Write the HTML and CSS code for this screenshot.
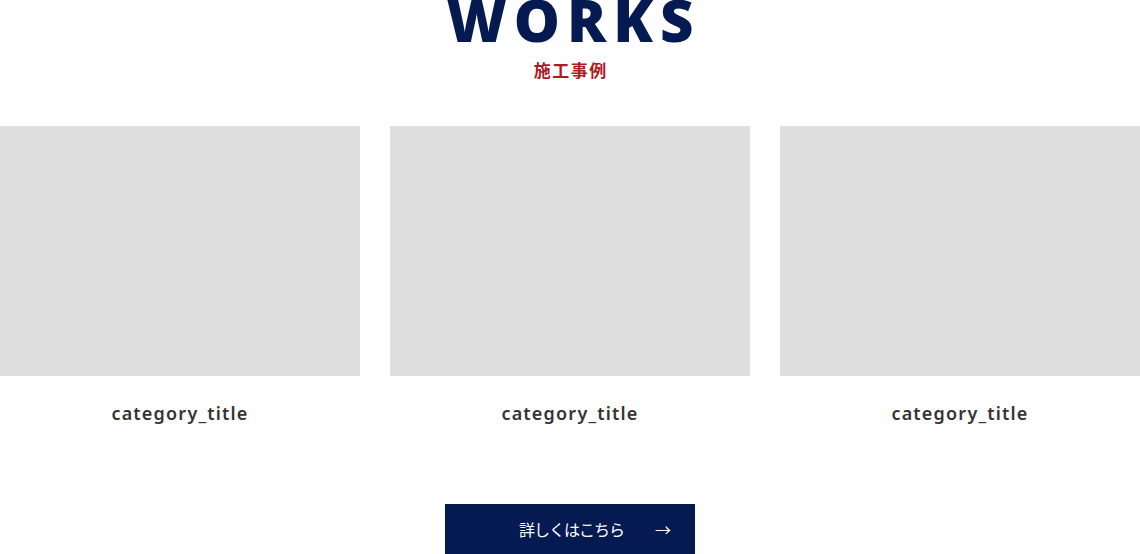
FILE: index.html
```html
<!DOCTYPE html>
<html lang="ja">
<head>
<meta charset="utf-8">
<link rel="stylesheet" href="styles.css">
</head>
<body>
<section class="works">
  <header class="works-head">
    <h2 class="works-title">WORKS</h2>
    <p class="works-sub">施工事例</p>
  </header>
  <div class="works-list">
    <a class="work-card" href="#">
      <div class="work-thumb"></div>
      <p class="work-name">category_title</p>
    </a>
    <a class="work-card" href="#">
      <div class="work-thumb"></div>
      <p class="work-name">category_title</p>
    </a>
    <a class="work-card" href="#">
      <div class="work-thumb"></div>
      <p class="work-name">category_title</p>
    </a>
  </div>
  <div class="works-more">
    <a class="more-btn" href="#"><span class="more-label">詳しくはこちら</span><span class="more-arrow">→</span></a>
  </div>
</section>
</body>
</html>
```
FILE: styles.css
```css
* { box-sizing: border-box; }
html, body { margin: 0; padding: 0; background: #fff; }
body { width: 1140px; overflow: hidden; }
.works { display: flex; flex-direction: column; align-items: center; }
.works-head { display: flex; flex-direction: column; align-items: center; margin-top: -16px; }
.works-title {
  margin: 0;
  padding-left: 7px;
  font-family: "Open Sans", "Noto Sans", sans-serif;
  font-weight: 800;
  font-size: 58px;
  line-height: 72px;
  letter-spacing: 7px;
  color: #041a50;
}
.works-sub {
  margin: 2px 0 0;
  font-family: "Noto Sans CJK JP", sans-serif;
  font-weight: 700;
  font-size: 17px;
  line-height: 24px;
  letter-spacing: 1.5px;
  padding-left: 1.5px;
  color: #ad1a1f;
}
.works-list {
  margin-top: 44px;
  width: 100%;
  display: grid;
  grid-template-columns: repeat(3, 360px);
  column-gap: 30px;
}
.work-card { display: flex; flex-direction: column; align-items: center; text-decoration: none; }
.work-thumb { width: 360px; height: 250px; background: #dfdfdf; }
.work-name {
  margin: 24px 0 0;
  font-family: "Noto Sans", "Open Sans", sans-serif;
  font-weight: 600;
  font-size: 18px;
  line-height: 26px;
  letter-spacing: 1.2px;
  color: #333;
}
.works-more { margin-top: 78px; }
.more-btn {
  display: flex;
  align-items: center;
  width: 250px;
  height: 50px;
  padding: 0 24px 0 74px;
  background: #041a50;
  color: #fff;
  text-decoration: none;
  font-family: "Noto Sans CJK JP", sans-serif;
  font-size: 16px;
}
.more-label { flex: 1; letter-spacing: -1px; }
.more-arrow { font-family: "Noto Sans CJK JP", sans-serif; font-size: 16px; }
```
